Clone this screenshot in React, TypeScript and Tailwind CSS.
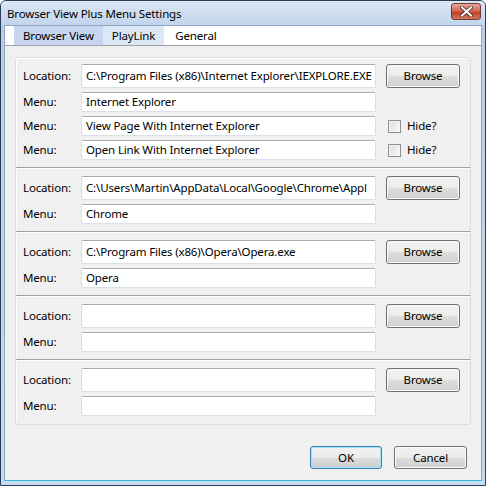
import React from 'react';

const font = { fontFamily: '"Noto Sans", "Open Sans", sans-serif' };

function TextBox({ value, h }: { value?: string; h: string }) {
    return (
        <div className={`w-[295px] ${h} bg-white border border-[#dbdfe6] border-t-[#abadb3] rounded-[2px] flex items-center px-[4px] overflow-hidden whitespace-nowrap text-black`}>
            {value}
        </div>
    );
}

function WinButton({ label, isDefault = false, w = 'w-[74px]', h = 'h-[24px]' }: { label: string; isDefault?: boolean; w?: string; h?: string }) {
    return (
        <div
            className={`${w} ${h} rounded-[3px] border ${isDefault ? 'border-[#3c7fb1] shadow-[inset_0_0_0_1px_#9fe2fb]' : 'border-[#707070] shadow-[inset_0_0_0_1px_#fbfbfb]'} bg-[linear-gradient(to_bottom,#f2f2f2_0%,#ebebeb_50%,#dddddd_51%,#cfcfcf_100%)] flex items-center justify-center text-black`}
        >
            {label}
        </div>
    );
}

type RowData = { label: string; value?: string; right?: React.ReactNode };

function Row({ label, value, right }: RowData) {
    const isLocation = label === 'Location:';
    return (
        <div className="flex items-center">
            <div className="w-[58px] text-black">{label}</div>
            <TextBox value={value} h={isLocation ? 'h-[24px]' : 'h-[20px]'} />
            <div className="ml-[10px]">{right}</div>
        </div>
    );
}

function Hide() {
    return (
        <div className="flex items-center gap-[6px] pl-[2px] text-black">
            <div className="w-[13px] h-[13px] border border-[#8e8f8f] bg-[linear-gradient(135deg,#dcdcdc,#fafafa)] shadow-[inset_0_0_0_1px_#f4f4f4]" />
            <span>Hide?</span>
        </div>
    );
}

function Section({ rows, first = false, last = false }: { rows: RowData[]; first?: boolean; last?: boolean }) {
    return (
        <div className={`flex flex-col gap-[4px] pl-[7px] ${first ? 'pt-[6px]' : 'pt-[8px]'} ${last ? 'pb-[8px]' : 'pb-[7px] border-b border-[#a0a0a0] shadow-[0_1px_0_#ffffff]'}`}>
            {rows.map((r, i) => (
                <Row key={i} {...r} />
            ))}
        </div>
    );
}

export default function App() {
    const browse = <WinButton label="Browse" />;
    return (
        <div style={font} className="w-[486px] h-[486px] text-[11.5px] tracking-[-0.15px] bg-[linear-gradient(to_bottom,#c4d7ee,#b9cfe9_25px,#c7dbf0)] border border-[#2c3c52] rounded-t-[6px] flex flex-col overflow-hidden">
            {/* title bar */}
            <div className="h-[24px] flex items-center pl-[6px] pr-[4px] bg-[linear-gradient(to_bottom,#dbe7f4,#c2d5ec)]">
                <span className="text-[11.5px] mt-[1px] text-black">Browser View Plus Menu Settings</span>
                <div className="ml-auto w-[30px] h-[17px] mt-[-3px] rounded-[3px] border border-[#6f3a35] bg-[linear-gradient(to_bottom,#e9a99b,#d1604d_50%,#c0391f_51%,#d2765f)] flex items-center justify-center">
                    <svg width="13" height="11" viewBox="0 0 13 11">
                        <path d="M2 1.5 L11 9.5 M11 1.5 L2 9.5" stroke="#4a2a26" strokeWidth="3.6" strokeLinecap="square" />
                        <path d="M2 1.5 L11 9.5 M11 1.5 L2 9.5" stroke="#ffffff" strokeWidth="2" strokeLinecap="square" />
                    </svg>
                </div>
            </div>

            {/* client area */}
            <div className="flex-1 mx-[3px] mb-[4px] border border-[#8ea4c0] border-b-[#37b7d8] flex flex-col bg-[#f0f0f0]">
                {/* tabs */}
                <div className="h-[20px] bg-white border-b border-[#a0a0a0] flex items-stretch pl-[9px] text-black">
                    <div className="px-[9px] flex items-center bg-[#c6d6ee]">Browser View</div>
                    <div className="px-[9px] flex items-center bg-[#dde8f6]">PlayLink</div>
                    <div className="px-[11px] flex items-center">General</div>
                </div>

                {/* group */}
                <div className="mx-[10px] mt-[11px] border border-[#d5dfe5] rounded-[3px] shadow-[inset_1px_1px_0_#ffffff] flex flex-col">
                    <Section
                        first
                        rows={[
                            { label: 'Location:', value: 'C:\\Program Files (x86)\\Internet Explorer\\IEXPLORE.EXE', right: browse },
                            { label: 'Menu:', value: 'Internet Explorer' },
                            { label: 'Menu:', value: 'View Page With Internet Explorer', right: <Hide /> },
                            { label: 'Menu:', value: 'Open Link With Internet Explorer', right: <Hide /> },
                        ]}
                    />
                    <Section
                        rows={[
                            { label: 'Location:', value: 'C:\\Users\\Martin\\AppData\\Local\\Google\\Chrome\\Appl', right: browse },
                            { label: 'Menu:', value: 'Chrome' },
                        ]}
                    />
                    <Section
                        rows={[
                            { label: 'Location:', value: 'C:\\Program Files (x86)\\Opera\\Opera.exe', right: browse },
                            { label: 'Menu:', value: 'Opera' },
                        ]}
                    />
                    <Section
                        rows={[
                            { label: 'Location:', right: browse },
                            { label: 'Menu:' },
                        ]}
                    />
                    <Section
                        last
                        rows={[
                            { label: 'Location:', right: browse },
                            { label: 'Menu:' },
                        ]}
                    />
                </div>

                {/* buttons */}
                <div className="mt-auto mb-[11px] flex justify-end gap-[12px] pr-[14px]">
                    <WinButton label="OK" isDefault w="w-[72px]" h="h-[23px]" />
                    <WinButton label="Cancel" w="w-[73px]" h="h-[23px]" />
                </div>
            </div>
        </div>
    );
}
